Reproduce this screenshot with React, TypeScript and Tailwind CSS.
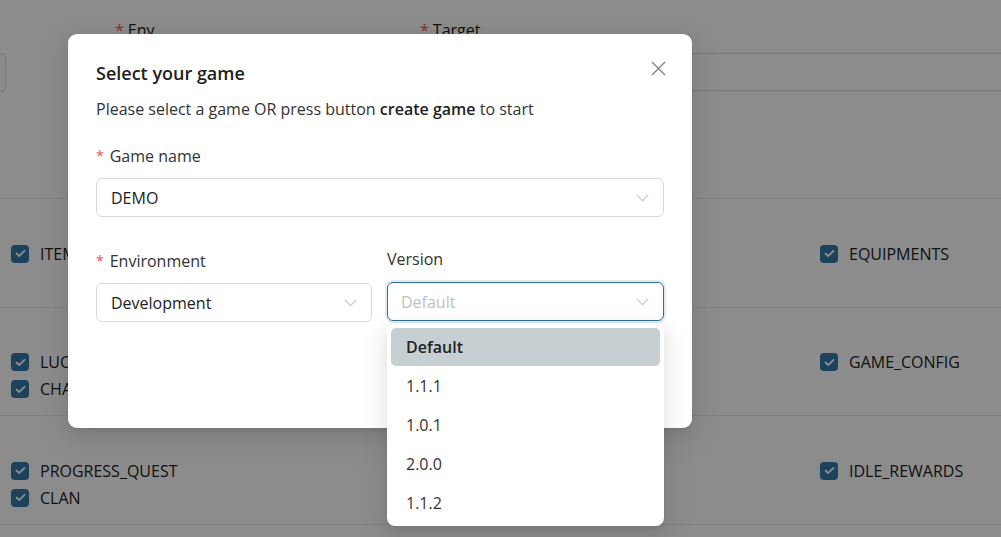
import React from "react";

const font = { fontFamily: '"Open Sans", "Noto Sans", sans-serif' };

const Check = () => (
  <span className="w-[18px] h-[18px] rounded-[4px] bg-[#367aa8] flex items-center justify-center shrink-0">
    <svg width="11" height="9" viewBox="0 0 11 9" fill="none">
      <path d="M1.5 4.5 L4.2 7 L9.5 1.8" stroke="#fff" strokeWidth="1.8" strokeLinecap="round" strokeLinejoin="round" />
    </svg>
  </span>
);

const Item = ({ label }: { label: string }) => (
  <div className="flex items-center gap-[11px] h-[27px]">
    <Check />
    <span className="text-[16px] text-[#222]">{label}</span>
  </div>
);

const Chevron = ({ color = "#bfbfbf" }: { color?: string }) => (
  <svg width="13" height="8" viewBox="0 0 13 8" fill="none">
    <path d="M0.8 0.8 L6.5 6.8 L12.2 0.8" stroke={color} strokeWidth="1.1" />
  </svg>
);

const rows = [
  { left: ["ITEMS"], right: "EQUIPMENTS" },
  { left: ["LUCKY_SPIN", "CHARACTERS"], right: "GAME_CONFIG" },
  { left: ["PROGRESS_QUEST", "CLAN"], right: "IDLE_REWARDS" },
];

const versions = ["Default", "1.1.1", "1.0.1", "2.0.0", "1.1.2"];

const shadow =
  "shadow-[0_6px_16px_rgba(0,0,0,0.08),0_3px_6px_-4px_rgba(0,0,0,0.12),0_9px_28px_8px_rgba(0,0,0,0.05)]";

export default function App() {
  return (
    <div className="relative w-[1001px] h-[537px] overflow-hidden bg-white" style={font}>
      {/* page behind the modal */}
      <div className="pt-[18px]">
        <div className="flex">
          <div className="w-[6px] h-[39px] mt-[35px] border border-[#d9d9d9] rounded-r-[6px] border-l-0" />
          <div className="ml-[109px] w-[295px]">
            <div className="text-[16px] text-[#222] h-[24px]"><span className="text-[#ff4d4f] mr-1">*</span>Env</div>
          </div>
          <div className="ml-[10px] flex-1">
            <div className="text-[16px] text-[#222] h-[24px]"><span className="text-[#ff4d4f] mr-1">*</span>Target</div>
            <div className="mt-[11px] h-[38px] border border-[#d9d9d9] rounded-l-[6px] -mr-[10px]" />
          </div>
        </div>
        <div className="mt-[106px] border-t border-[#e8e8e8]">
          {rows.map((r, i) => (
            <div key={i} className="h-[108.5px] border-b border-[#e8e8e8] flex pt-[41px] pl-[11px]">
              <div className="w-[809px]">
                {r.left.map((l) => (
                  <Item key={l} label={l} />
                ))}
              </div>
              <div>
                <Item label={r.right} />
              </div>
            </div>
          ))}
        </div>
      </div>

      {/* mask */}
      <div className="absolute inset-0 bg-black/45" />

      {/* modal */}
      <div className={`absolute left-[68px] top-[34px] w-[624px] h-[394px] bg-white rounded-[9px] ${shadow} px-[28px] pt-[26px]`}>
        <button className="absolute right-[26px] top-[26px] w-[16px] h-[16px] flex items-center justify-center">
          <svg width="15" height="15" viewBox="0 0 15 15">
            <path d="M1 1 L14 14 M14 1 L1 14" stroke="#7f7f7f" strokeWidth="1.3" />
          </svg>
        </button>
        <div className="text-[18px] font-semibold text-[#222] leading-[26px]">Select your game</div>
        <div className="mt-[11px] text-[16px] text-[#333] leading-[24px]">
          Please select a game OR press button <span className="font-semibold text-[#222]">create game</span> to start
        </div>

        <div className="mt-[23px] text-[16px] text-[#333] leading-[24px] flex items-center">
          <span className="text-[#ff4d4f] mr-[6px] text-[14px]">*</span>Game name
        </div>
        <div className="mt-[10px] h-[39px] border border-[#d9d9d9] rounded-[6px] flex items-center justify-between pl-[14px] pr-[14px]">
          <span className="text-[16px] text-[#222]">DEMO</span>
          <Chevron />
        </div>

        <div className="mt-[30px] flex gap-[15px]">
          <div className="w-[276px]">
            <div className="text-[16px] text-[#333] leading-[24px] mt-[2px] flex items-center">
              <span className="text-[#ff4d4f] mr-[6px] text-[14px]">*</span>Environment
            </div>
            <div className="mt-[10px] h-[39px] border border-[#d9d9d9] rounded-[6px] flex items-center justify-between pl-[14px] pr-[14px]">
              <span className="text-[16px] text-[#222]">Development</span>
              <Chevron />
            </div>
          </div>
          <div className="flex-1 relative">
            <div className="text-[16px] text-[#333] leading-[24px]">Version</div>
            <div className="mt-[11px] h-[39px] border border-[#2f7392] rounded-[6px] shadow-[0_0_0_2px_rgba(47,115,146,0.15)] flex items-center justify-between pl-[13px] pr-[14px]">
              <span className="text-[16px] text-[#bfbfbf]">Default</span>
              <Chevron />
            </div>
            <div className={`absolute left-0 right-0 top-[77px] bg-white rounded-[8px] p-[4px] ${shadow} z-10`}>
              {versions.map((v, i) => (
                <div
                  key={v}
                  className={
                    i === 0
                      ? "h-[38px] rounded-[5px] bg-[#c6cfd2] flex items-center px-[15px] text-[16px] font-semibold text-[#222]"
                      : "h-[39px] flex items-center px-[15px] text-[16px] text-[#333]"
                  }
                >
                  {v}
                </div>
              ))}
            </div>
          </div>
        </div>
      </div>
    </div>
  );
}
